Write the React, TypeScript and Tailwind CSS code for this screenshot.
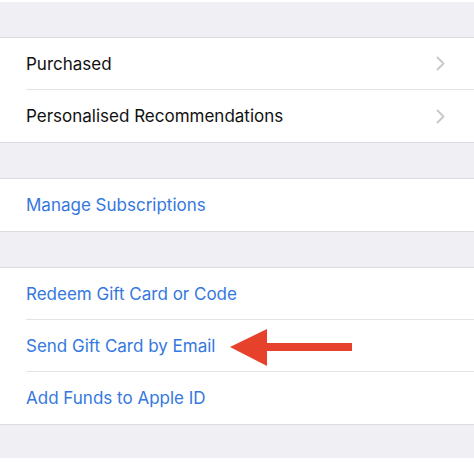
import React from "react";

type Row = { label: string; link?: boolean; chevron?: boolean; arrow?: boolean };

const groups: Row[][] = [
  [
    { label: "Purchased", chevron: true },
    { label: "Personalised Recommendations", chevron: true },
  ],
  [{ label: "Manage Subscriptions", link: true }],
  [
    { label: "Redeem Gift Card or Code", link: true },
    { label: "Send Gift Card by Email", link: true, arrow: true },
    { label: "Add Funds to Apple ID", link: true },
  ],
];

function Chevron() {
  return (
    <svg width="9" height="15" viewBox="0 0 9 15" className="mr-[29px]">
      <path d="M1.5 1.5 L7.5 7.5 L1.5 13.5" fill="none" stroke="#c7c7cc" strokeWidth="1.8" strokeLinecap="round" strokeLinejoin="round" />
    </svg>
  );
}

// big red pointer drawn over the screenshot
function RedArrow() {
  return (
    <svg width="122" height="38" viewBox="0 0 122 38" className="ml-[15px] mt-[2px]">
      <polygon points="0,18 37,0 37,37" fill="#e5412b" />
      <rect x="36" y="14" width="86" height="8" fill="#e5412b" />
    </svg>
  );
}

function Gap() {
  return <div className="h-[35px] bg-[#efeff4]" />;
}

export default function App() {
  return (
    <div className="w-[474px] h-[463px] overflow-hidden bg-white font-['Inter',sans-serif]">
      <div className="h-[2px] bg-white" />
      {groups.map((rows, gi) => (
        <div key={gi}>
          <Gap />
          <div className="border-y border-[#dcdce0] bg-white">
            {rows.map((r, i) => (
              <div key={r.label} className="pl-[26px]">
                <div
                  className={
                    "h-[52px] flex items-center justify-between " +
                    (i < rows.length - 1 ? "border-b border-[#e3e3e6]" : "")
                  }
                >
                  <div className="flex items-center pt-[2px]">
                    <span className={"text-[17px] " + (r.link ? "text-[#3478e0]" : "text-[#111111]")}>
                      {r.label}
                    </span>
                    {r.arrow && <RedArrow />}
                  </div>
                  {r.chevron && <Chevron />}
                </div>
              </div>
            ))}
          </div>
        </div>
      ))}
      <div className="h-[33px] bg-[#efeff4]" />
    </div>
  );
}
